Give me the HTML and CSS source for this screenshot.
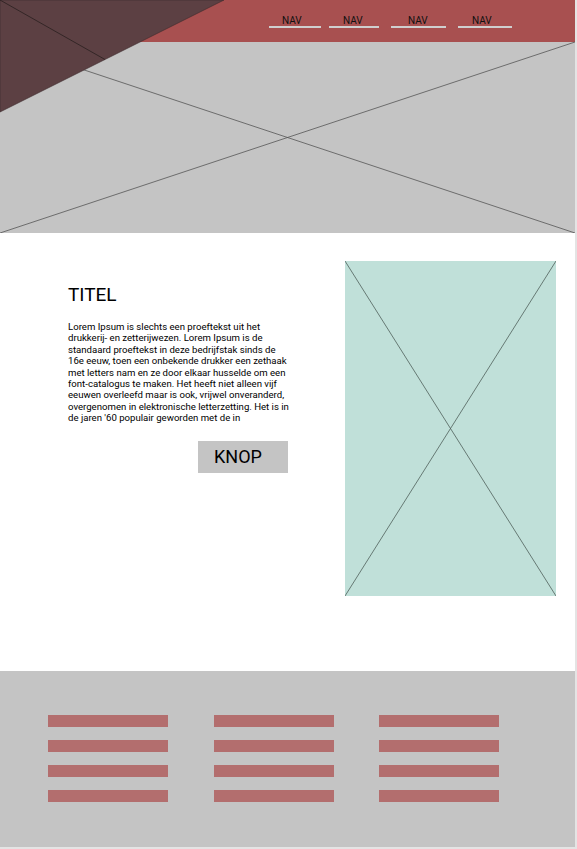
FILE: index.html
```html
<!DOCTYPE html>
<html lang="nl">
<head>
<meta charset="utf-8">
<title>Wireframe</title>
<link rel="stylesheet" href="styles.css">
</head>
<body>
<div class="page">
  <header class="hero">
    <svg class="hero-art" width="575" height="233" viewBox="0 0 575 233" aria-hidden="true">
      <line x1="0" y1="42" x2="575" y2="233" class="hero-line"/>
      <line x1="0" y1="233" x2="575" y2="42" class="hero-line"/>
      <polygon points="0,0 224,0 0,112" class="hero-shape"/>
      <line x1="0" y1="0" x2="105" y2="59.5" class="hero-line dark"/>
    </svg>
    <nav class="topnav">
      <a class="nav-item w1" href="#">NAV</a>
      <a class="nav-item w2" href="#">NAV</a>
      <a class="nav-item w3" href="#">NAV</a>
      <a class="nav-item w4" href="#">NAV</a>
    </nav>
  </header>

  <main class="content">
    <section class="text-col">
      <h1 class="title">TITEL</h1>
      <p class="body-text">Lorem Ipsum is slechts een proeftekst uit het drukkerij- en zetterijwezen. Lorem Ipsum is de standaard proeftekst in deze bedrijfstak sinds de 16e eeuw, toen een onbekende drukker een zethaak met letters nam en ze door elkaar husselde om een font-catalogus te maken. Het heeft niet alleen vijf eeuwen overleefd maar is ook, vrijwel onveranderd, overgenomen in elektronische letterzetting. Het is in de jaren '60 populair geworden met de in</p>
      <div class="btn-row"><button class="btn" type="button">KNOP</button></div>
    </section>
    <div class="image-ph">
      <svg width="211" height="335" viewBox="0 0 211 335" preserveAspectRatio="none" aria-hidden="true">
        <line x1="0" y1="0" x2="211" y2="335" class="ph-line"/>
        <line x1="211" y1="0" x2="0" y2="335" class="ph-line"/>
      </svg>
    </div>
  </main>

  <footer class="footer">
    <div class="f-col"><span class="bar"></span><span class="bar"></span><span class="bar"></span><span class="bar"></span></div>
    <div class="f-col"><span class="bar"></span><span class="bar"></span><span class="bar"></span><span class="bar"></span></div>
    <div class="f-col"><span class="bar"></span><span class="bar"></span><span class="bar"></span><span class="bar"></span></div>
  </footer>
</div>
</body>
</html>
```

FILE: styles.css
```css
html {
  background: #e4e4e4;
}
body {
  margin: 0;
  font-family: Roboto, "Liberation Sans", Arial, sans-serif;
  color: #000;
}
.page {
  width: 575px;
  height: 847px;
  background: #fff;
  display: flex;
  flex-direction: column;
}

/* Header */
.hero {
  position: relative;
  height: 233px;
  background: #c4c4c4;
  flex: none;
}
.hero-art {
  position: absolute;
  left: 0;
  top: 0;
  z-index: 1;
}
.hero-line {
  stroke: #555;
  stroke-width: 0.8;
}
.hero-line.dark {
  stroke: #2a2020;
}
.hero-shape {
  fill: #5c4043;
  stroke: #3a2a2b;
  stroke-width: 0.6;
}
.topnav {
  height: 42px;
  background: #a85050;
  display: flex;
  align-items: flex-start;
  padding-left: 269px;
  gap: 8px;
  box-sizing: border-box;
  padding-top: 16px;
}
.nav-item {
  position: relative;
  z-index: 2;
  display: block;
  height: 10px;
  font-size: 10px;
  line-height: 10px;
  color: #111;
  text-decoration: none;
  border-bottom: 2px solid #cfcfcf;
  box-sizing: content-box;
}
.w1 { width: 52px; text-indent: 13px; }
.w2 { width: 50px; text-indent: 14px; }
.w3 { width: 55px; text-indent: 17px; margin-left: 4px; }
.w4 { width: 54px; text-indent: 14px; margin-left: 4px; }

/* Main */
.content {
  height: 438px;
  flex: none;
  display: flex;
  justify-content: space-between;
  align-items: flex-start;
  padding: 28px 19px 0 68px;
  box-sizing: border-box;
}
.text-col {
  width: 224px;
  padding-top: 22px;
}
.title {
  margin: 0;
  font-size: 19px;
  font-weight: 400;
  line-height: 23px;
}
.body-text {
  margin: 15px 0 0;
  font-size: 9.6px;
  line-height: 11.4px;
}
.btn-row {
  display: flex;
  margin-top: 17px;
  padding-left: 130px;
}
.btn {
  width: 90px;
  height: 32px;
  border: none;
  background: #c4c4c4;
  font-family: Roboto, "Liberation Sans", Arial, sans-serif;
  font-size: 18px;
  color: #000;
  text-align: left;
  padding: 0 0 0 16px;
  margin: 0;
}
.image-ph {
  width: 211px;
  height: 335px;
  background: #c0e0d9;
  flex: none;
}
.image-ph svg {
  display: block;
}
.ph-line {
  stroke: #4f5f5b;
  stroke-width: 0.8;
}

/* Footer */
.footer {
  flex: 1;
  background: #c4c4c4;
  display: flex;
  gap: 45.5px;
  padding: 44px 0 0 48px;
  box-sizing: border-box;
}
.f-col {
  display: flex;
  flex-direction: column;
  gap: 13px;
}
.bar {
  display: block;
  width: 120px;
  height: 12px;
  background: #b36e6e;
}
```
